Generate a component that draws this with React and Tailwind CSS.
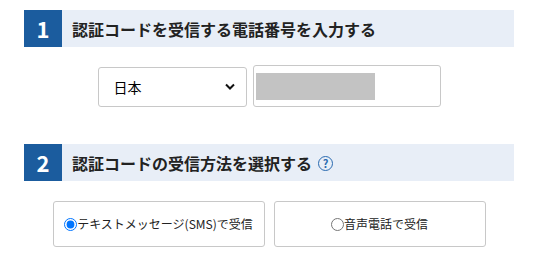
import { useState } from "react";

const font = { fontFamily: '"Noto Sans CJK JP", "Noto Sans", sans-serif' };

function SectionHeader({ num, title, help }) {
  return (
    <div className="flex h-[37px] items-stretch bg-[#e8eef7]">
      <div className="flex w-[38px] items-center justify-center bg-[#1b5c9e] text-[22px] font-bold text-white">
        {num}
      </div>
      <div className="flex items-center pl-[10px] text-[16px] font-bold text-[#222]">
        {title}
        {help && (
          <span className="ml-[6px] mt-[2px] flex h-[15px] w-[15px] items-center justify-center rounded-full border-[1.5px] border-[#2a6ab0] text-[11px] font-bold leading-none text-[#2a6ab0]">
            ?
          </span>
        )}
      </div>
    </div>
  );
}

export default function App() {
  const [method, setMethod] = useState("sms");

  return (
    <div className="w-[538px] h-[258px] bg-white pt-[10px] px-[24px]" style={font}>
      <SectionHeader num="1" title="認証コードを受信する電話番号を入力する" />

      {/* phone number input */}
      <div className="mt-[18px] flex items-end justify-center gap-[6px]">
        <div className="relative h-[40px] w-[149px]">
          <select className="h-full w-full appearance-none rounded-[3px] border border-[#c8c8c8] bg-white pl-[15px] text-[14px] text-black outline-none">
            <option>日本</option>
          </select>
          <svg
            className="pointer-events-none absolute right-[12px] top-[16px]"
            width="10"
            height="7"
            viewBox="0 0 10 7"
          >
            <path d="M1 1.5 L5 5.5 L9 1.5" fill="none" stroke="#111" strokeWidth="2" />
          </svg>
        </div>
        <div className="flex h-[42px] w-[188px] items-center rounded-[3px] border border-[#c8c8c8] bg-white px-[2px]">
          <div className="h-[27px] w-[119px] bg-[#c3c3c3]" />
        </div>
      </div>

      <div className="mt-[37px]">
        <SectionHeader num="2" title="認証コードの受信方法を選択する" help />
      </div>

      {/* receive method */}
      <div className="mt-[20px] flex justify-center gap-[9px]">
        <label className="flex h-[46px] w-[212px] cursor-pointer items-center justify-center rounded-[3px] border border-[#c8c8c8] text-[12px] text-[#222]">
          <input
            type="radio"
            name="method"
            className="m-0 h-[13px] w-[13px]"
            checked={method === "sms"}
            onChange={() => setMethod("sms")}
          />
          テキストメッセージ(SMS)で受信
        </label>
        <label className="flex h-[46px] w-[212px] cursor-pointer items-center justify-center rounded-[3px] border border-[#c8c8c8] text-[12px] text-[#222]">
          <input
            type="radio"
            name="method"
            className="m-0 h-[13px] w-[13px]"
            checked={method === "voice"}
            onChange={() => setMethod("voice")}
          />
          音声電話で受信
        </label>
      </div>
    </div>
  );
}
